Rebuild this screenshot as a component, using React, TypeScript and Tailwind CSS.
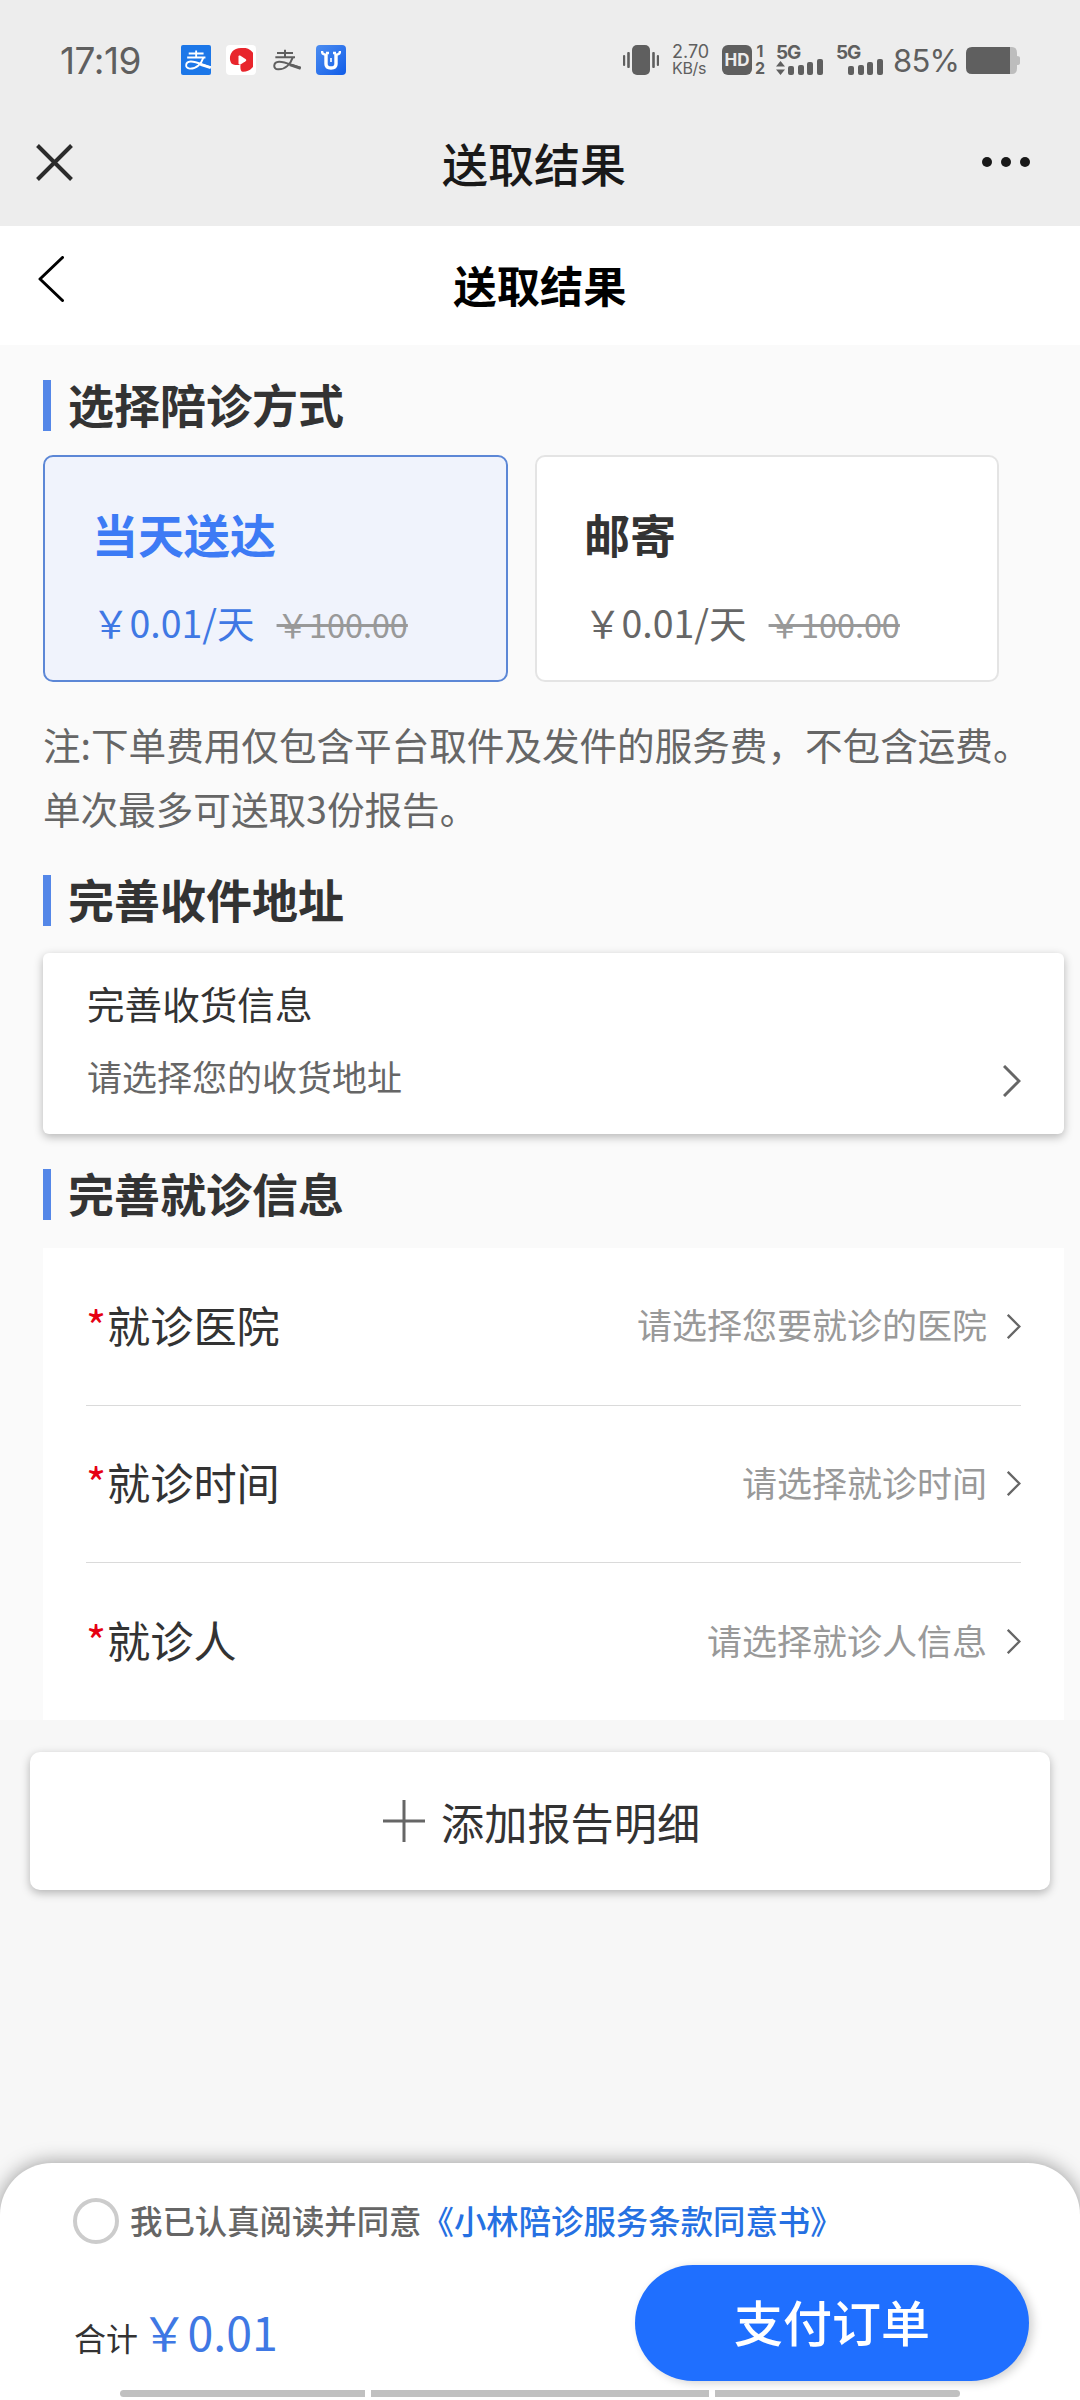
import { useState } from "react";

const DELIVERY_TYPES = [
  { key: "today", title: "当天送达", price: "￥0.01/天", origin: "￥100.00" },
  { key: "mail", title: "邮寄", price: "￥0.01/天", origin: "￥100.00" },
];

const FORM_ROWS = [
  { label: "就诊医院", placeholder: "请选择您要就诊的医院" },
  { label: "就诊时间", placeholder: "请选择就诊时间" },
  { label: "就诊人", placeholder: "请选择就诊人信息" },
];

function AlipayGlyph({ className }: { className?: string }) {
  return (
    <svg viewBox="0 0 84 64" className={className} fill="none" stroke="currentColor" strokeWidth="6">
      <path d="M12 11H60M36 1V25M7 24H66" />
      <path d="M59 25C53 43 38 61 15 60C-1 59 0 38 18 37C36 36 58 49 83 56" />
      <path d="M50 46L83 57" strokeWidth="9" />
    </svg>
  );
}

function Signal() {
  return (
    <div className="flex h-[16px] items-end gap-[3.6px]">
      <span className="h-[9px] w-[6px] rounded-[2px] bg-[#5f5f5f]" />
      <span className="h-[10px] w-[6px] rounded-[2px] bg-[#5f5f5f]" />
      <span className="h-[13px] w-[6px] rounded-[2px] bg-[#5f5f5f]" />
      <span className="h-[16px] w-[6px] rounded-[2px] bg-[#5f5f5f]" />
    </div>
  );
}

function StatusBar() {
  return (
    <div className="flex h-[120px] shrink-0 items-center pl-[60px] font-['Inter',sans-serif] text-[#5f5f5f]">
      <span className="w-[121px] text-[37px] leading-none tracking-[-0.5px]">17:19</span>
      <div className="flex items-center">
        <span className="flex h-[30px] w-[30px] items-center justify-end overflow-hidden rounded-[2px] bg-[#1c77e8] text-white">
          <AlipayGlyph className="h-[20px] w-[26px]" />
        </span>
        <span className="ml-[15px] flex h-[30px] w-[30px] items-center justify-center rounded-[4px] bg-white">
          <svg viewBox="0 0 24 24" className="h-[24px] w-[24px]">
            <path d="M12 0A12 12 0 1 1 14 23.8C12 24 11 21 11.500 17C8 17 5 17.500 2.500 15.500C-1 11 1 0 12 0Z" fill="#e8252c" />
            <path d="M9.500 8.500C9.500 7.500 10.500 7.200 11.500 7.700L16.500 11C17.500 11.700 17.500 12.600 16.500 13.300L11.500 16.500C10.500 17 9.500 16.500 9.500 15.500Z" fill="#fff" />
          </svg>
        </span>
        <AlipayGlyph className="ml-[17px] h-[22px] w-[28px]" />
        <span className="ml-[15px] flex h-[30px] w-[30px] items-center justify-center rounded-[4px] bg-linear-to-br from-[#4b8cf0] to-[#0f5ce8]">
          <svg viewBox="0 0 20 20" className="h-[20px] w-[20px]" fill="none" stroke="#fff">
            <path d="M1 1C1 4 3 5 6 4.500M19 1C19 4 17 5 14 4.500" strokeWidth="2.400" />
            <path d="M5 3H8M12 3H15" strokeWidth="2.600" />
            <path d="M5 4V14Q5 18 10 18Q15 18 15 14V4" strokeWidth="3.400" />
            <path d="M10 8V12" strokeWidth="1.600" />
          </svg>
        </span>
      </div>

      <div className="ml-[277px] flex h-[30px] items-center">
        <svg viewBox="0 0 36 30" className="h-[30px] w-[36px]" fill="#5f5f5f">
          <rect x="0" y="10" width="2.200" height="11" rx="1" />
          <rect x="4.200" y="7" width="2.600" height="16" rx="1" />
          <rect x="9" y="0" width="18" height="30" rx="5" />
          <rect x="29.200" y="7" width="2.600" height="16" rx="1" />
          <rect x="33.800" y="10" width="2.200" height="11" rx="1" />
        </svg>
        <div className="ml-[13px] flex w-[50px] flex-col text-[17px] leading-[17px]">
          <span className="text-[18px]">2.70</span>
          <span className="text-[16px] tracking-[-0.3px]">KB/s</span>
        </div>
        <span className="flex h-[30px] w-[30px] items-center justify-center rounded-[6px] bg-[#5f5f5f] text-[17px] leading-none font-bold text-[#ececec]">
          HD
        </span>
        <div className="ml-[2px] flex w-[12px] flex-col items-center text-[16px] leading-[17px] font-bold">
          <span>1</span>
          <span>2</span>
        </div>
        <div className="ml-[10px] flex h-[30px] w-[50px] flex-col justify-between">
          <span className="h-[14px] text-[19px] leading-[15px] font-bold tracking-[-1.2px]">5G</span>
          <div className="flex items-end gap-[3px]">
            <svg viewBox="0 0 9 14" className="h-[14px] w-[9px]" fill="#5f5f5f">
              <path d="M4.500 0L9 5.500H0ZM4.500 14L0 8.500H9Z" />
            </svg>
            <Signal />
          </div>
        </div>
        <div className="ml-[10px] flex h-[30px] w-[50px] flex-col justify-between">
          <span className="h-[14px] text-[19px] leading-[15px] font-bold tracking-[-1.2px]">5G</span>
          <div className="flex justify-end pr-[3px]">
            <Signal />
          </div>
        </div>
        <span className="ml-[7px] w-[73px] text-[31px] leading-none tracking-[-0.8px]">85%</span>
        <svg viewBox="0 0 54 27" className="h-[27px] w-[54px]">
          <path d="M44 0H46Q51 0 51 6V9Q54 9 54 11V16Q54 18 51 18V21Q51 27 46 27H44Z" fill="#bdbdbd" />
          <path d="M6 0H44V27H6Q0 27 0 21V6Q0 0 6 0Z" fill="#5f5f5f" />
        </svg>
      </div>
    </div>
  );
}

function SectionTitle({ children }: { children: string }) {
  return (
    <div className="flex h-[51px] items-center">
      <span className="h-[51px] w-[8px] bg-[#5487e8]" />
      <h2 className="ml-[17px] pb-[4px] text-[46px] leading-[47px] font-bold text-[#333]">{children}</h2>
    </div>
  );
}

function Arrow({ className }: { className?: string }) {
  return (
    <svg viewBox="0 0 18 32" className={className} fill="none" stroke="#666" strokeWidth="3">
      <path d="M1 1L16 16L1 31" />
    </svg>
  );
}

export default function App() {
  const [type, setType] = useState("today");
  const [agreed, setAgreed] = useState(false);

  return (
    <div className="flex h-[2400px] w-[1080px] flex-col overflow-hidden bg-[#f7f7f7] font-['Noto_Sans_CJK_SC',sans-serif]">
      <div className="h-[226px] shrink-0 bg-[#ededed]">
        <StatusBar />
        <div className="flex h-[84px] items-center justify-between pr-[50px] pl-[36px]">
          <svg viewBox="0 0 37 37" className="h-[37px] w-[37px]" stroke="#2b2b2b" strokeWidth="4">
            <path d="M1.500 1.500L35.500 35.500M35.500 1.500L1.500 35.500" />
          </svg>
          <h1 className="ml-[13px] text-[46px] leading-[50px] font-medium text-[#191919]">送取结果</h1>
          <div className="flex gap-[9px]">
            <span className="h-[10px] w-[10px] rounded-full bg-[#191919]" />
            <span className="h-[10px] w-[10px] rounded-full bg-[#191919]" />
            <span className="h-[10px] w-[10px] rounded-full bg-[#191919]" />
          </div>
        </div>
      </div>

      <header className="grid h-[119px] shrink-0 grid-cols-3 items-center bg-white">
        <svg viewBox="0 0 26 46" className="mb-[14px] ml-[38px] h-[46px] w-[26px]" fill="none" stroke="#000" strokeWidth="3" strokeLinecap="round" strokeLinejoin="round">
          <path d="M24.500 1.500L2 23L24.500 44.500" />
        </svg>
        <div className="pb-[4px] text-center text-[43.200px] leading-[50px] font-bold text-black">送取结果</div>
      </header>

      <main className="h-[1375px] shrink-0 bg-[#fafafa] pt-[35px] pr-[16px] pl-[43px]">
        <SectionTitle>选择陪诊方式</SectionTitle>
        <div className="mt-[24px] flex gap-[27px]">
          {DELIVERY_TYPES.map((item) => (
            <button
              type="button"
              key={item.key}
              onClick={() => setType(item.key)}
              className={`flex h-[227px] flex-col rounded-[10px] border-2 pt-[48px] pl-[47px] text-left ${
                type === item.key ? "w-[465px] border-[#5c87d6] bg-[#f0f3fc]" : "w-[464px] border-[#e4e4e4] bg-white"
              }`}
            >
              <span className={`text-[46px] leading-[56px] font-bold ${type === item.key ? "text-[#3d7bf5]" : "text-[#333]"}`}>
                {item.title}
              </span>
              <span className="mt-[35px] flex items-baseline leading-[52px]">
                <span className={`text-[37.500px] ${type === item.key ? "text-[#3f78e4]" : "text-[#666]"}`}>{item.price}</span>
                <span className="ml-[22px] text-[32.400px] text-[#999] line-through decoration-[3px]">{item.origin}</span>
              </span>
            </button>
          ))}
        </div>
        <p className="mt-[30px] mb-[35px] w-[1010px] text-[37.600px] leading-[64px] text-[#666]">
          注:下单费用仅包含平台取件及发件的服务费，不包含运费。
          <br />
          单次最多可送取3份报告。
        </p>

        <SectionTitle>完善收件地址</SectionTitle>
        <div className="mt-[27px] flex h-[181px] items-end justify-between rounded-[6px] bg-white pr-[43px] pb-[35px] pl-[44px] shadow-[0_3px_10px_rgba(0,0,0,0.28)]">
          <div className="flex flex-col">
            <span className="text-[37.600px] leading-[50px] text-[#333]">完善收货信息</span>
            <span className="mt-[25px] text-[35px] leading-[46px] text-[#666]">请选择您的收货地址</span>
          </div>
          <Arrow className="mb-[2px] h-[32px] w-[18px]" />
        </div>

        <div className="mt-[35px]">
          <SectionTitle>完善就诊信息</SectionTitle>
        </div>
        <div className="mt-[28px] h-[472px] divide-y divide-[#dadada] bg-white px-[43px]">
          {FORM_ROWS.map((row) => (
            <div key={row.label} className="mx-0 flex h-[157.500px] items-center justify-between">
              <div className="flex pb-[5px] text-[43.200px] leading-[50px] text-[#333]">
                <span className="w-[21px] text-[#e60012]">*</span>
                <span>{row.label}</span>
              </div>
              <div className="flex items-center">
                <span className="pb-[4px] text-[35px] leading-[50px] text-[#999]">{row.placeholder}</span>
                <Arrow className="ml-[20px] h-[25px] w-[14px]" />
              </div>
            </div>
          ))}
        </div>
      </main>

      <button
        type="button"
        className="mx-[30px] mt-[32px] flex h-[138px] shrink-0 items-center rounded-[10px] bg-white pl-[353px] shadow-[0_3px_10px_rgba(0,0,0,0.28)]"
      >
        <svg viewBox="0 0 42 42" className="h-[42px] w-[42px]" stroke="#666" strokeWidth="3">
          <path d="M21 0V42M0 21H42" />
        </svg>
        <span className="ml-[16px] text-[43.200px] leading-[50px] text-[#333]">添加报告明细</span>
      </button>

      <footer className="mt-auto flex h-[237px] shrink-0 flex-col rounded-t-[52px] bg-white shadow-[0_0_20px_rgba(0,0,0,0.4)]">
        <div className="mt-[35px] flex h-[46px] items-center pl-[73px]">
          <button
            type="button"
            onClick={() => setAgreed(!agreed)}
            className={`h-[46px] w-[46px] rounded-full border-4 border-[#ccc] ${agreed ? "bg-[#1f6fff]" : "bg-white"}`}
          />
          <p className="ml-[11px] pb-[3px] text-[32.400px] leading-[40px] font-medium whitespace-nowrap text-[#666]">
            我已认真阅读并同意<span className="text-[#2570e2]">《小林陪诊服务条款同意书》</span>
          </p>
        </div>
        <div className="mt-[21px] flex h-[116px] items-center justify-between pr-[51px] pl-[74px]">
          <div className="flex items-baseline pt-[22px] leading-[50px]">
            <span className="text-[32px] text-[#333]">合计</span>
            <span className="ml-[3px] text-[46.500px] text-[#3f78e4]">￥0.01</span>
          </div>
          <button
            type="button"
            className="h-[116px] w-[394px] rounded-full bg-[#1f6fff] pb-[4px] text-[49px] leading-[60px] font-medium text-white shadow-[4px_2px_10px_rgba(0,0,0,0.18)]"
          >
            支付订单
          </button>
        </div>
        <div className="mt-[9px] flex gap-[6px] pl-[120px]">
          <span className="h-[7px] w-[245px] rounded-l-full bg-[#c0c0c0]" />
          <span className="h-[7px] w-[338px] bg-[#c0c0c0]" />
          <span className="h-[7px] w-[245px] rounded-r-full bg-[#c0c0c0]" />
        </div>
      </footer>
    </div>
  );
}
